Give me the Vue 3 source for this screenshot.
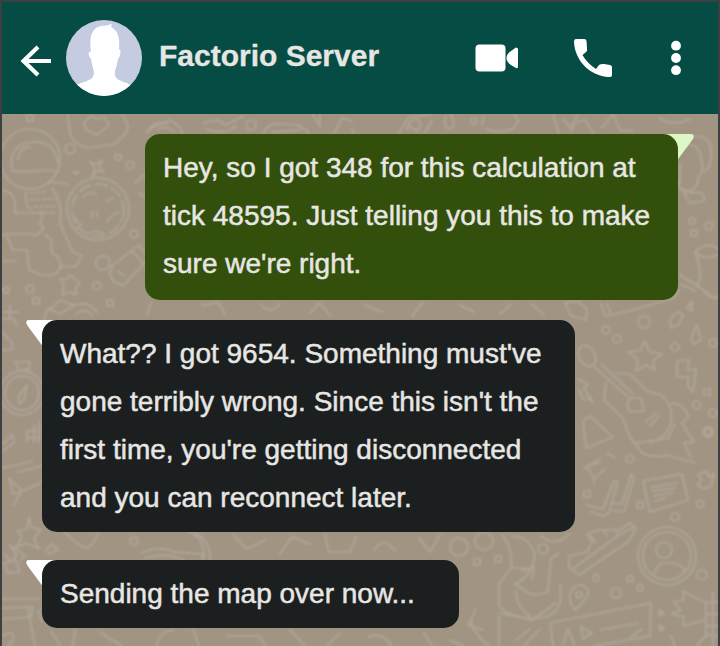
<script setup>
const title = 'Factorio Server'
const messages = [
  {
    side: 'out',
    lines: ['Hey, so I got 348 for this calculation at', 'tick 48595. Just telling you this to make', "sure we're right."],
  },
  {
    side: 'in',
    lines: ["What?? I got 9654. Something must've", "gone terribly wrong. Since this isn't the", "first time, you're getting disconnected", 'and you can reconnect later.'],
  },
  { side: 'in last', lines: ['Sending the map over now...'] },
]
const dots = [
  [70, 149, 5], [118, 157, 3], [130, 165, 4], [103, 263, 7], [97, 286, 4], [30, 289, 4], [134, 234, 4], [6, 290, 3],
  [644, 322, 6], [606, 330, 4], [617, 339, 4], [675, 347, 4], [697, 405, 4], [713, 413, 4], [713, 343, 4],
  [630, 459, 4], [543, 549, 5], [675, 517, 4], [702, 575, 5], [616, 593, 5], [596, 578, 3], [630, 579, 3], [640, 588, 3],
  [709, 226, 4], [692, 221, 3], [251, 125, 5], [134, 541, 4], [459, 547, 9], [484, 541, 9], [474, 121, 3], [708, 432, 5],
]
const squares = [
  [27, 115], [33, 298], [107, 300], [704, 389], [705, 429], [697, 501], [584, 491], [691, 230], [637, 502], [474, 559], [495, 556],
]
</script>

<template>
  <main class="phone">
    <header class="bar">
      <svg class="back" viewBox="0 0 34 34" aria-hidden="true">
        <path d="M31 17H3M18 3L3.5 17L18 31" />
      </svg>
      <svg class="avatar" viewBox="0 0 76 76" aria-hidden="true">
        <defs>
          <clipPath id="face"><circle cx="38" cy="38" r="38" /></clipPath>
        </defs>
        <g clip-path="url(#face)">
          <rect width="76" height="76" fill="#c5cbe0" />
          <path
            fill="#fff"
            d="M25 32C23 18 25 8 35 6C39 6 42 5 46 4L45 7C53 11 54 20 53 29C56 30 54 37 52 39C51 45 50 48 49 51C48 58 51 60 61 63Q67 66 70 76H5Q8 65 15 63C25 60 28 58 28 52C27 48 26 45 25 39C22 36 22 30 25 32Z"
          />
        </g>
      </svg>
      <h1 class="title">{{ title }}</h1>
      <svg class="video" viewBox="0 0 44 28" aria-hidden="true">
        <rect x="0.5" y="0.5" width="30" height="27" rx="4" />
        <path d="M41 3.5Q43 3.5 43 5V23Q43 24.5 41 24L36 21Q31.5 18 31.5 14T36 7Z" />
      </svg>
      <svg class="call" viewBox="0 0 38 38" aria-hidden="true">
        <path d="M2 0H10Q12.5 0 12.5 2L13 9Q13.5 12 12 13L8.5 16C12 22 16 26 22 30L25 26Q27 24.5 30 25L36 26Q38 26.5 38 28V36Q38 38 35 38C16 37 1 22 0 3Q0 0 2 0Z" />
      </svg>
      <svg class="more" viewBox="0 0 10 36" aria-hidden="true">
        <circle cx="5" cy="5.7" r="4.9" /><circle cx="5" cy="18" r="4.9" /><circle cx="5" cy="30.2" r="4.9" />
      </svg>
    </header>

    <section class="chat">
      <svg class="wallpaper" viewBox="2 114 716 532" aria-hidden="true">
        <g class="doodle">
          <!-- balloon, badge and cookie -->
          <circle cx="30" cy="159" r="30" />
          <path d="M13 171C8 155 16 143 32 142S54 147 58 162M13 171C26 174 34 168 58 171M18 160Q20 146 30 147" />
          <path d="M68 114L70 134L76 143L87 148L103 146L115 144L126 133L128 125L122 114M84 123L90 116L98 119L105 117L109 125L97 135L86 130Z" />
          <path d="M90 162L96 164L102 160L99 168L104 172L97 171L92 177L95 168ZM73 172H79L76 174Z" />
          <circle cx="98" cy="209" r="31" stroke-dasharray="15 2" />
          <circle cx="98" cy="210" r="26" stroke-dasharray="12 5" />
          <path d="M83 197Q90 191 96 194M107 201L113 198M73 216L81 225L76 228M92 211V217M97 211V217M107 222Q112 213 119 213M89 233Q97 230 103 233" />
          <!-- shower head and vehicle -->
          <path d="M2 190Q14 191 15 204V213H43L40 224L44 228L37 235Q16 232 2 235M48 182Q58 182 68 184M26 192Q24 204 31 210M52 188Q63 202 60 223Q66 238 73 252L82 256L76 266L59 267" />
          <path stroke-dasharray="3 3" d="M30 193L47 192M30 200L55 199M34 207L56 206M39 212L55 213" />
          <path d="M7 237L13 250H27L29 269L40 275H54L62 267L58 257L52 253L51 239L45 235M2 261H16" />
          <path d="M69 275L75 279L80 283L76 287V295L69 292L62 295L64 285L60 279H67Z" />
          <path d="M113 265L139 245L149 258L123 286L113 281L110 273ZM118 271L124 276M132 251L143 263M135 183L144 175L150 182M139 193L146 198M147 132L155 126L168 123" />
          <path d="M10 305V317M3 312H18M44 319L48 308L60 314L73 306Q88 299 97 312M76 315Q84 306 92 315" />
          <!-- strip under the bar -->
          <path d="M147 133Q152 121 163 123L171 120L180 128L184 136M158 130Q164 124 174 132M203 123L218 120L226 125L243 116M206 129Q224 136 236 126M264 132Q268 122 283 124L298 125L308 131V136M272 132L300 130M313 115L320 126V114M334 134L342 118L352 121M354 136L352 129" />
          <path d="M399 133L409 117L431 115M408 130Q407 120 416 119Q425 123 417 131L410 126M425 133L432 120M446 116Q442 127 450 129Q457 126 451 114M482 124L484 116M486 129Q499 134 512 129L519 121L514 114M553 115L559 134M563 119L572 130L577 115M571 124L585 120L594 135M602 128L613 114L620 130L633 131M659 118Q673 127 690 119" />
          <!-- right edge -->
          <path d="M688 137Q710 133 711 150Q712 169 704 171M679 146Q699 140 701 158Q705 171 698 178Q698 190 686 192Q674 188 679 179M680 163V184M681 188L692 193Q705 190 704 201L690 203L684 193" />
          <path d="M695 252Q707 240 718 249M695 252Q704 274 697 287M695 252Q703 261 718 255M680 275L701 288L712 297H718M681 284L695 291M670 320Q678 308 683 315L678 325L671 328ZM687 308L692 301V311ZM691 338L697 325L701 340L694 344ZM704 291Q710 299 718 298" />
          <path d="M601 304L605 316L629 311L674 298L679 290M607 304L611 314M565 303L571 316L586 320L587 309L577 301Z" />
          <!-- star, guitar and rocket -->
          <path d="M645 341L650 352L662 354L653 361L655 370L646 365L636 371L638 360L628 352L640 350Z" />
          <ellipse cx="587" cy="356" rx="8" ry="11" transform="rotate(-30 587 356)" />
          <path d="M595 367L628 397M601 364L633 394M630 398H641L644 411L630 412L627 405ZM616 373L630 374L647 391L661 395Q674 406 671 423Q666 439 650 442M606 383L604 400L622 417L630 437L641 452Q652 459 666 455L696 463M637 443L669 438M671 403Q685 404 688 417L682 423L694 442L684 443L691 458M675 424L668 438M646 422L656 413M650 426L659 416" />
          <path d="M677 361L689 360L688 370L696 369L693 392L688 387V377H677ZM578 379L588 384L584 388L593 402L587 398M579 390L584 400M590 416L613 437L586 448L583 421ZM584 469L600 459M607 453L615 458M588 465L600 463" />
          <!-- ticks and note -->
          <path d="M587 505L603 509L614 481L618 482L609 512L604 516L591 512M611 503L622 504L631 474L634 478L624 512L612 510" />
          <path d="M643 481L682 474L688 500L650 512ZM651 487L677 483M653 491L675 488M654 496L672 493M655 501L665 498M698 475L706 471L709 477L714 474L711 486L704 489L697 485L702 480ZM588 468L594 479L605 469M594 479V484" />
          <!-- shoe and contact badge -->
          <path d="M569 556L587 552L592 542L587 534L598 530L620 530L630 523L636 528L629 541L579 575L569 567ZM574 568L620 534L633 528M590 536L596 542M604 531L607 535M615 528L617 533" />
          <circle cx="667" cy="556" r="29" /><circle cx="667" cy="556" r="24" /><circle cx="664" cy="550" r="8" />
          <path d="M654 577Q654 568 662 563H674Q683 565 685 572" />
          <path d="M571 591Q578 580 588 589Q591 595 575 610Q567 600 571 591Z" /><circle cx="579" cy="595" r="3" />
          <!-- snowman, ticket and hand -->
          <path d="M502 535Q511 543 512 567L499 584V606Q512 620 540 618Q565 615 560 585M512 536Q529 536 535 555Q532 576 515 584L527 592Q534 597 548 592L551 558L558 554M522 571L534 567L532 579M516 591Q516 607 530 616M500 613L532 620L556 603M499 616V646M512 568L526 568" />
          <path d="M553 646L550 623L651 603L650 636L594 646M581 627L583 639L592 633ZM600 630L638 623M631 637L642 629M563 645L568 629L574 644M524 646L540 629M516 640L530 629" />
          <path d="M706 603L683 591L684 600L673 602L681 610L672 614L684 617L683 626L706 620M706 603V636M713 593V646M706 602H718M706 614H718M706 626H718M659 610L664 613L660 616ZM659 625L664 628L660 631ZM671 636L675 646M697 646Q707 630 718 637" />
          <path d="M476 609L468 625L483 630M471 621Q473 633 489 646M450 640L464 646M541 536Q555 548 570 534" />
          <!-- left column -->
          <path d="M2 332L13 344L12 349L2 351M3 319H14L17 326M23 369H28M20 372L15 362H30L28 373" />
          <circle cx="22" cy="393" r="22" /><circle cx="22" cy="393" r="17" />
          <path d="M19 395L27 385L24 400L19 404ZM2 445L12 435Q17 442 10 446L2 451M27 431V442M34 425V442M39 422V442M26 431H40M27 438H40M2 468L33 461M18 472L42 466M9 478L22 491L13 505M9 478L13 493M14 494L30 488L42 482" />
          <path d="M29 517L31 527L41 530L34 538L39 549L27 543L17 547L22 536L17 531L27 529ZM45 551L52 544L58 550L48 554M10 545L17 555L10 562L5 554M4 563L16 560L20 572L8 573ZM14 547L25 556L20 560M2 599H40M2 608L33 607L31 617L2 619M28 609L35 646M38 610L42 622M2 636Q15 628 13 640L8 646" />
          <!-- between the cards -->
          <path d="M64 532L79 545Q91 553 98 533M141 553Q160 545 174 552L202 554V560M145 558Q167 552 184 560M189 532Q205 538 204 558M196 533Q211 542 210 560M233 535L247 549L265 540M280 554L292 537L310 544M325 535L329 552H350L356 537M374 550Q384 535 395 551M419 538L430 552L440 535M51 631L61 646M75 630L73 646M101 633L122 646M157 646Q158 632 173 630M199 646L193 629M227 636H260L265 646M290 630L305 646M327 646L340 633M369 637Q382 631 392 646M424 633L432 646" />
          <path d="M50 310L60 300L74 305M147 315L151 303M202 306L218 302L225 314M261 305Q270 315 280 304M310 313L319 303L331 316M365 305L382 312M412 316L423 302M460 305L474 312M500 314L512 304M532 304L544 315" />
          <circle v-for="([x, y, r], i) in dots" :key="'d' + i" :cx="x" :cy="y" :r="r" />
          <rect v-for="([x, y], i) in squares" :key="'s' + i" :x="x" :y="y" width="6" height="6" />
        </g>
      </svg>

      <article v-for="(m, i) in messages" :key="i" class="bubble" :class="m.side">
        <svg class="tail" viewBox="0 0 32 28" aria-hidden="true"><path d="M3 0H32V28H18L1 5Q-1 0 3 0Z" /></svg>
        <div class="body">
          <p v-for="line in m.lines" :key="line">{{ line }}</p>
        </div>
      </article>
    </section>
  </main>
</template>

<style>
body {
  margin: 0;
  overflow: hidden;
}
</style>

<style scoped>
.phone {
  box-sizing: border-box;
  height: 646px;
  display: flex;
  flex-direction: column;
  border: 2px solid #3c4043;
  border-bottom: 0;
  font-family: "Liberation Sans", Arial, sans-serif;
  color: #e8e6e3;
}
.bar {
  height: 112px;
  flex: none;
  box-sizing: border-box;
  display: flex;
  align-items: center;
  padding: 0 37px 0 18px;
  background: #054c44;
  fill: #fff;
}
.back,
.video,
.call,
.more {
  filter: blur(0.4px);
}
.back {
  width: 34px;
  height: 34px;
  margin-top: 6px;
  fill: none;
  stroke: #fff;
  stroke-width: 4.2;
}
.avatar {
  width: 76px;
  height: 76px;
  margin-left: 11.5px;
}
.title {
  flex: 1;
  margin: 0 0 4px 17.5px;
  font-size: 30px;
  font-weight: 700;
  line-height: 36px;
  white-space: nowrap;
  -webkit-text-stroke: 0.3px #e8e6e3;
}
.video {
  width: 44px;
  height: 28px;
}
.call {
  width: 38px;
  height: 38px;
  margin-left: 55px;
}
.more {
  width: 10px;
  height: 36px;
  margin-left: 59.5px;
}
.chat {
  position: relative;
  flex: 1;
  display: flex;
  flex-direction: column;
  align-items: flex-start;
  padding: 20px 40px 0;
  background: #a19483;
}
.wallpaper {
  position: absolute;
  inset: 0;
  width: 716px;
  height: 532px;
}
.doodle {
  fill: none;
  stroke: #aea395;
  stroke-width: 2.2;
  stroke-linejoin: round;
  stroke-linecap: round;
  filter: blur(0.8px);
}
.bubble {
  position: relative;
  margin-bottom: 28px;
}
.body {
  position: relative;
  box-sizing: border-box;
  width: 533px;
  padding: 10px 18px;
  border-radius: 15px;
  background: #1b1f20;
}
.body p {
  margin: 0;
  font-size: 28px;
  line-height: 48px;
  white-space: nowrap;
  -webkit-text-stroke: 0.5px #e8e6e3;
}
.out {
  align-self: flex-end;
  margin-bottom: 20px;
}
.out .body {
  padding-bottom: 12px;
  background: #324f0b;
}
.last .body {
  width: 417px;
}
.tail {
  position: absolute;
  top: 0;
  left: -16px;
  width: 32px;
  height: 28px;
  fill: #fff;
}
.out .tail {
  left: auto;
  right: -16px;
  transform: scaleX(-1);
  fill: #dcf8c6;
}
</style>
